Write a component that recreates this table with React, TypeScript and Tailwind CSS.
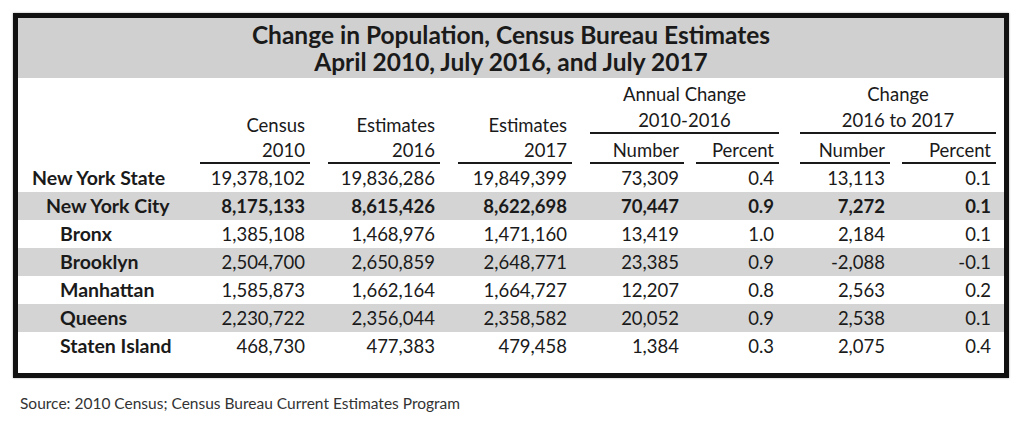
const rows: { label: string; indent: string; gray: boolean; bold: boolean; values: string[] }[] = [
  { label: "New York State", indent: "pl-[14px]", gray: false, bold: false, values: ["19,378,102", "19,836,286", "19,849,399", "73,309", "0.4", "13,113", "0.1"] },
  { label: "New York City", indent: "pl-[28px]", gray: true, bold: true, values: ["8,175,133", "8,615,426", "8,622,698", "70,447", "0.9", "7,272", "0.1"] },
  { label: "Bronx", indent: "pl-[42px]", gray: false, bold: false, values: ["1,385,108", "1,468,976", "1,471,160", "13,419", "1.0", "2,184", "0.1"] },
  { label: "Brooklyn", indent: "pl-[42px]", gray: true, bold: false, values: ["2,504,700", "2,650,859", "2,648,771", "23,385", "0.9", "-2,088", "-0.1"] },
  { label: "Manhattan", indent: "pl-[42px]", gray: false, bold: false, values: ["1,585,873", "1,662,164", "1,664,727", "12,207", "0.8", "2,563", "0.2"] },
  { label: "Queens", indent: "pl-[42px]", gray: true, bold: false, values: ["2,230,722", "2,356,044", "2,358,582", "20,052", "0.9", "2,538", "0.1"] },
  { label: "Staten Island", indent: "pl-[42px]", gray: false, bold: false, values: ["468,730", "477,383", "479,458", "1,384", "0.3", "2,075", "0.4"] },
];

const cols = "grid grid-cols-[182px_110px_130px_132px_112px_95px_111px_106px]";
const font = { fontFamily: "Lato, 'Open Sans', sans-serif" };

function Underlined({ gap, lines }: { gap: string; lines: string[] }) {
  return (
    <div className={`flex flex-col justify-end ${gap}`}>
      <div className="border-b-2 border-[#1a1a1a] pr-[5px] text-right">
        {lines.map((line, i) => (
          <div key={line} className={i === lines.length - 1 ? "leading-[24px]" : "leading-[26px]"}>
            {line}
          </div>
        ))}
      </div>
    </div>
  );
}

function GroupHeading({ gap, top, bottom }: { gap: string; top: string; bottom: string }) {
  return (
    <div className={`col-span-2 pt-[2px] ${gap}`}>
      <div className="border-b-2 border-[#1a1a1a] text-center">
        <div className="leading-[28px]">{top}</div>
        <div className="leading-[24px]">{bottom}</div>
      </div>
    </div>
  );
}

function SubHeading({ gap, text }: { gap: string; text: string }) {
  return (
    <div className={`pt-[4px] ${gap}`}>
      <div className="border-b-2 border-[#1a1a1a] pr-[5px] text-right leading-[24px]">{text}</div>
    </div>
  );
}

export default function App() {
  return (
    <div className="h-[421px] w-[1024px] overflow-hidden bg-white text-[#1a1a1a]" style={font}>
      <div className="ml-[13px] mt-[13px] w-[996px] border-[5px] border-[#111] pb-[13px] shadow-[0_0_2px_rgba(0,0,0,0.35)]">
        <div className="flex h-[60px] flex-col items-center justify-center bg-[#d0d0d0] text-[24.5px] font-bold leading-[27px]">
          <div>Change in Population, Census Bureau Estimates</div>
          <div>April 2010, July 2016, and July 2017</div>
        </div>

        <div className={`${cols} h-[86px] grid-rows-[56px_30px] text-[18.5px]`}>
          <div className="row-span-2" />
          <div className="row-span-2 flex">
            <Underlined gap="w-full" lines={["Census", "2010"]} />
          </div>
          <div className="row-span-2 flex">
            <Underlined gap="w-full pl-[18px]" lines={["Estimates", "2016"]} />
          </div>
          <div className="row-span-2 flex">
            <Underlined gap="w-full pl-[18px]" lines={["Estimates", "2017"]} />
          </div>
          <GroupHeading gap="pl-[18px]" top="Annual Change" bottom="2010-2016" />
          <GroupHeading gap="pl-[21px]" top="Change" bottom="2016 to 2017" />
          <SubHeading gap="pl-[18px]" text="Number" />
          <SubHeading gap="pl-[12px]" text="Percent" />
          <SubHeading gap="pl-[21px]" text="Number" />
          <SubHeading gap="pl-[12px]" text="Percent" />
        </div>

        {rows.map((row) => (
          <div
            key={row.label}
            className={`${cols} h-[28px] items-center text-[18.5px] leading-[28px] ${row.gray ? "bg-[#d4d4d4]" : ""} ${row.bold ? "font-bold" : ""}`}
          >
            <div className={`text-[19.5px] font-bold ${row.indent}`}>{row.label}</div>
            {row.values.map((value, i) => (
              <div key={i} className="pr-[5px] text-right">
                {value}
              </div>
            ))}
          </div>
        ))}
      </div>

      <div className="ml-[20px] mt-[16px] text-[15.5px] leading-[18px] text-[#333]">
        Source: 2010 Census; Census Bureau Current Estimates Program
      </div>
    </div>
  );
}
